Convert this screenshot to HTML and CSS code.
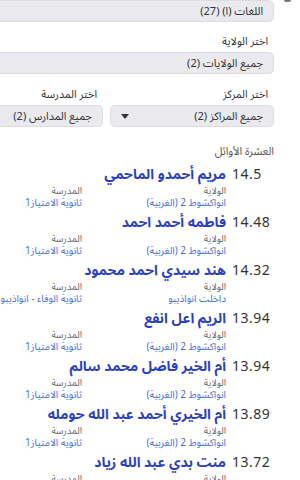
FILE: index.html
```html
<!DOCTYPE html>
<html lang="ar" dir="rtl">
<head>
  <meta charset="UTF-8">
  <title>العشرة الأوائل</title>
  <meta name="viewport" content="width=device-width, initial-scale=1.0">
  <link rel="stylesheet" href="styles.css">
</head>
<body>
  <span class="corner-mark"></span>
  <div class="page">
    <div class="field">
      <div class="select"><span>اللغات (ا) (27)</span><svg class="arrow" viewBox="0 0 8 5"><path d="M0 0h8L4 5z"/></svg></div>
    </div>

    <div class="field">
      <label>اختر الولاية</label>
      <div class="select"><span>جميع الولايات (2)</span><svg class="arrow" viewBox="0 0 8 5"><path d="M0 0h8L4 5z"/></svg></div>
    </div>

    <div class="field-row">
      <div class="field">
        <label>اختر المركز</label>
        <div class="select"><span>جميع المراكز (2)</span><svg class="arrow" viewBox="0 0 8 5"><path d="M0 0h8L4 5z"/></svg></div>
      </div>
      <div class="field">
        <label>اختر المدرسة</label>
        <div class="select"><span>جميع المدارس (2)</span><svg class="arrow" viewBox="0 0 8 5"><path d="M0 0h8L4 5z"/></svg></div>
      </div>
    </div>

    <h3 class="list-title">العشرة الأوائل</h3>

    <div class="top-list">
      <div class="entry">
        <div class="score">14.5</div>
        <div class="info">
          <div class="name">مريم أحمدو الماحمي</div>
          <div class="details">
            <div><div class="key">الولاية</div><div class="val">انواكشوط 2 (الغربية)</div></div>
            <div><div class="key">المدرسة</div><div class="val">ثانوية الامتياز1</div></div>
          </div>
        </div>
      </div>

      <div class="entry">
        <div class="score">14.48</div>
        <div class="info">
          <div class="name">فاطمه أحمد احمد</div>
          <div class="details">
            <div><div class="key">الولاية</div><div class="val">انواكشوط 2 (الغربية)</div></div>
            <div><div class="key">المدرسة</div><div class="val">ثانوية الامتياز1</div></div>
          </div>
        </div>
      </div>

      <div class="entry">
        <div class="score">14.32</div>
        <div class="info">
          <div class="name">هند سيدي احمد محمود</div>
          <div class="details">
            <div><div class="key">الولاية</div><div class="val">داخلت انواذيبو</div></div>
            <div><div class="key">المدرسة</div><div class="val">ثانوية الوفاء - انواذيبو</div></div>
          </div>
        </div>
      </div>

      <div class="entry">
        <div class="score">13.94</div>
        <div class="info">
          <div class="name">الريم اعل انفع</div>
          <div class="details">
            <div><div class="key">الولاية</div><div class="val">انواكشوط 2 (الغربية)</div></div>
            <div><div class="key">المدرسة</div><div class="val">ثانوية الامتياز1</div></div>
          </div>
        </div>
      </div>

      <div class="entry">
        <div class="score">13.94</div>
        <div class="info">
          <div class="name">أم الخير فاضل محمد سالم</div>
          <div class="details">
            <div><div class="key">الولاية</div><div class="val">انواكشوط 2 (الغربية)</div></div>
            <div><div class="key">المدرسة</div><div class="val">ثانوية الامتياز1</div></div>
          </div>
        </div>
      </div>

      <div class="entry">
        <div class="score">13.89</div>
        <div class="info">
          <div class="name">أم الخيري أحمد عبد الله حومله</div>
          <div class="details">
            <div><div class="key">الولاية</div><div class="val">انواكشوط 2 (الغربية)</div></div>
            <div><div class="key">المدرسة</div><div class="val">ثانوية الامتياز1</div></div>
          </div>
        </div>
      </div>

      <div class="entry">
        <div class="score">13.72</div>
        <div class="info">
          <div class="name">منت بدي عبد الله زياد</div>
          <div class="details">
            <div><div class="key">الولاية</div><div class="val">انواكشوط 2 (الغربية)</div></div>
            <div><div class="key">المدرسة</div><div class="val">ثانوية الامتياز1</div></div>
          </div>
        </div>
      </div>
    </div>
  </div>
</body>
</html>
```

FILE: styles.css
```css
html, body {
  margin: 0;
  background: #fff;
}
body {
  font-family: "Noto Sans Arabic", "Noto Sans Arabic UI", "Noto Naskh Arabic", "Noto Sans", "DejaVu Sans", sans-serif;
  color: #333;
  overflow: hidden;
}
.corner-mark {
  position: absolute;
  top: 0;
  right: 9px;
  width: 7px;
  height: 2px;
  background: #777;
  border-radius: 0 0 2px 2px;
}
.page {
  width: 335px;
  padding-right: 26px;
}
.field {
  display: flex;
  flex-direction: column;
}
.field label {
  font-size: 11px;
  line-height: 14px;
  color: #333;
  padding-right: 6px;
  margin-bottom: 3px;
}
.field + .field {
  margin-top: 13px;
}
.field-row {
  display: grid;
  grid-template-columns: 1fr 1fr;
  gap: 7px;
  margin-top: 14px;
}
.field-row .field + .field {
  margin-top: 0;
}
.select {
  display: flex;
  align-items: center;
  justify-content: space-between;
  height: 20px;
  background: #e9e9ee;
  border: 1px solid #dcdce2;
  border-radius: 5px;
  padding: 0 10px;
  font-size: 11px;
  color: #333;
}
.arrow {
  width: 8px;
  height: 5px;
  fill: #333;
}
.list-title {
  margin: 17px 0 5px;
  font-size: 11px;
  line-height: 16px;
  font-weight: normal;
  color: #555;
}
.entry {
  display: flex;
  align-items: flex-start;
  height: 48px;
}
.score {
  width: 42px;
  flex: none;
  direction: ltr;
  text-align: left;
  font-size: 14px;
  line-height: 20px;
  color: #333;
  letter-spacing: 0.5px;
}
.info {
  margin-right: 6px;
  flex: 1;
}
.name {
  font-size: 14px;
  line-height: 20px;
  font-weight: bold;
  color: #2b3fc4;
}
.details {
  display: grid;
  grid-template-columns: 144px 144px;
}
.key {
  font-size: 9.5px;
  line-height: 12px;
  color: #666;
}
.val {
  font-size: 10px;
  line-height: 12px;
  color: #3f6fd8;
}
```
